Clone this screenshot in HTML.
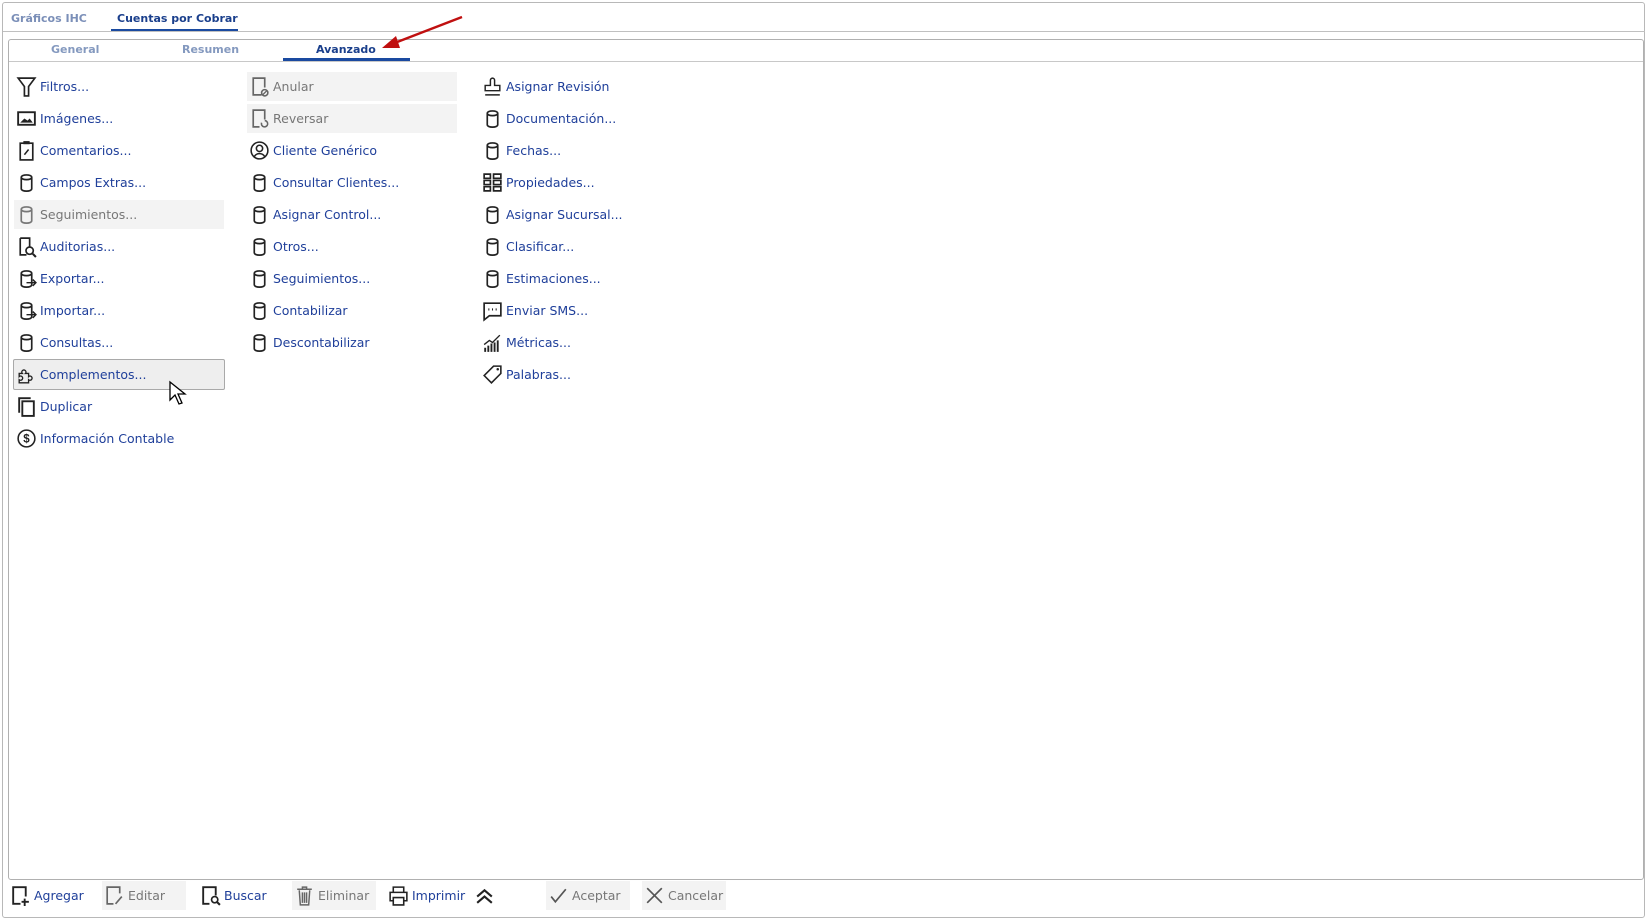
<!DOCTYPE html>
<html><head><meta charset="utf-8"><style>
*{margin:0;padding:0;box-sizing:border-box}
body{width:1647px;height:919px;background:#fff;font-family:"DejaVu Sans","Liberation Sans",sans-serif;position:relative;overflow:hidden}
.frame{position:absolute;left:2px;top:2px;width:1643px;height:916px;border:1px solid #b8b8b8;border-radius:3px}
.t{position:absolute;font-size:11px;font-weight:bold;white-space:nowrap}
.panel{position:absolute;left:8px;top:39px;width:1636px;height:841px;border:1px solid #b0b0b0;border-radius:3px}
.it{position:absolute;height:29px;display:flex;align-items:center;font-size:12.5px;color:#1f3f9a;white-space:nowrap;font-family:"DejaVu Sans",sans-serif}
.it svg{width:23px;height:23px;margin-left:1px;margin-right:2px;flex:none}
.dis{color:#777;background:#f3f3f3}
.sel{border:1px solid #a9a9a9;background:#eeeeee;border-radius:2px}
</style></head><body>
<div class="frame"></div>
<div class="t" style="left:11px;top:12px;color:#7b8fb8">Gráficos IHC</div>
<div class="t" style="left:117px;top:12px;color:#1a3f8c">Cuentas por Cobrar</div>
<div style="position:absolute;left:111px;top:29px;width:127px;height:3px;background:#1a4aa0"></div>
<div style="position:absolute;left:3px;top:31px;width:1642px;height:1px;background:#c0c0c0"></div>
<div class="panel"></div>
<div class="t" style="left:51px;top:43px;color:#8499bf">General</div>
<div class="t" style="left:182px;top:43px;color:#8499bf">Resumen</div>
<div class="t" style="left:316px;top:43px;color:#1a3f8c">Avanzado</div>
<div style="position:absolute;left:283px;top:58px;width:127px;height:3px;background:#1a4aa0"></div>
<div style="position:absolute;left:9px;top:61px;width:1634px;height:1px;background:#c8c8c8"></div>
<svg style="position:absolute;left:370px;top:10px" width="100" height="45"><line x1="92" y1="7" x2="22" y2="34" stroke="#c01010" stroke-width="2.5"/><polygon points="12,38 26,26 30,38" fill="#c01010"/></svg>

<div id="items"></div>
<script>
const cyl='<path d="M6 6c0-3 10-3 10 0v11c0 3-10 3-10 0zM6 6c0 3 10 3 10 0" fill="none" stroke="#222" stroke-width="1.6"/>';
const I={
cyl,
filt:'<path d="M3 3h16l-6 8v9h-4v-9z" fill="none" stroke="#222" stroke-width="1.6"/>',
img:'<rect x="3" y="5" width="16" height="12" fill="none" stroke="#222" stroke-width="1.8"/><path d="M5 15l4-4 3 2 2-2 3 4z" fill="#222"/>',
clip:'<rect x="5" y="4" width="12" height="16" fill="none" stroke="#222" stroke-width="1.6"/><rect x="8" y="2" width="6" height="3" fill="#222"/><path d="M9 15l4-5" stroke="#222" stroke-width="1.5"/>',
aud:'<path d="M5 3h9v9M5 3v16h6" fill="none" stroke="#222" stroke-width="1.6"/><circle cx="14" cy="15" r="3.5" fill="none" stroke="#222" stroke-width="1.6"/><path d="M17 18l3 3" stroke="#222" stroke-width="2"/>',
exp:cyl+'<path d="M11 15h9m-3-3l3 3-3 3" fill="none" stroke="#222" stroke-width="1.4"/>',
puz:'<path d="M4 10h3a2 2 0 1 1 3 0h3v3a2 2 0 1 1 0 3v3H4v-3a2 2 0 1 0 0-3z" fill="none" stroke="#222" stroke-width="1.3"/>',
dup:'<rect x="7" y="6" width="11" height="14" fill="none" stroke="#222" stroke-width="1.8"/><path d="M4 17V3h11" fill="none" stroke="#222" stroke-width="1.8"/>',
dol:'<circle cx="11" cy="11" r="8" fill="none" stroke="#222" stroke-width="1.5"/><text x="11" y="15" font-size="11" text-anchor="middle" font-family="Liberation Sans" font-weight="bold" fill="#222">$</text>',
anu:'<path d="M13 19H5V3h11v9" fill="none" stroke="#666" stroke-width="1.6"/><circle cx="16" cy="17" r="3" fill="none" stroke="#666" stroke-width="1.5"/><path d="M14 19l4-4" stroke="#666" stroke-width="1.3"/>',
rev:'<path d="M11 19H5V3h11v9" fill="none" stroke="#666" stroke-width="1.6"/><path d="M13 15a3 3 0 1 0 3-2" fill="none" stroke="#666" stroke-width="1.5"/>',
user:'<circle cx="11" cy="11" r="8" fill="none" stroke="#222" stroke-width="1.5"/><circle cx="11" cy="9" r="3" fill="none" stroke="#222" stroke-width="1.5"/><path d="M6 17c2-4 8-4 10 0" fill="none" stroke="#222" stroke-width="1.5"/>',
stamp:'<path d="M9 10V5a2 2 0 1 1 4 0v5h5v5H4v-5zM4 19h14" fill="none" stroke="#222" stroke-width="1.4"/>',
grid:'<path d="M3 3h6v4H3zM12 3h7v4h-7zM3 9h6v4H3zM12 9h7v4h-7zM3 15h6v4H3zM12 15h7v4h-7z" fill="none" stroke="#222" stroke-width="1.6"/>',
sms:'<path d="M3 4h16v12H8l-5 4z" fill="none" stroke="#222" stroke-width="1.6"/><path d="M7 10h1M10.5 10h1M14 10h1" stroke="#222" stroke-width="2"/>',
met:'<path d="M4 20v-4M7 20v-6M10 20v-8M13 20v-9M16 20v-11" stroke="#222" stroke-width="1.8"/><path d="M3 13l5-4 3 2 7-7" fill="none" stroke="#222" stroke-width="1.3"/>',
tag:'<path d="M3 12L12 3h7v7l-9 9z" fill="none" stroke="#222" stroke-width="1.5"/><circle cx="16" cy="6" r="1.2" fill="#222"/>'
};
const gcyl=cyl.replace(/#222/g,'#777');
const cols=[[14,[['filt','Filtros...'],['img','Imágenes...'],['clip','Comentarios...'],['cyl','Campos Extras...'],['gcyl','Seguimientos...','dis'],['aud','Auditorias...'],['exp','Exportar...'],['exp','Importar...'],['cyl','Consultas...'],['puz','Complementos...','sel'],['dup','Duplicar'],['dol','Información Contable']]],
[247,[['anu','Anular','dis'],['rev','Reversar','dis'],['user','Cliente Genérico'],['cyl','Consultar Clientes...'],['cyl','Asignar Control...'],['cyl','Otros...'],['cyl','Seguimientos...'],['cyl','Contabilizar'],['cyl','Descontabilizar']]],
[480,[['stamp','Asignar Revisión'],['cyl','Documentación...'],['cyl','Fechas...'],['grid','Propiedades...'],['cyl','Asignar Sucursal...'],['cyl','Clasificar...'],['cyl','Estimaciones...'],['sms','Enviar SMS...'],['met','Métricas...'],['tag','Palabras...']]]];
let h='';
cols.forEach(([x,list])=>list.forEach((it,i)=>{
 const y=72+i*32; const ic=it[0]=='gcyl'?gcyl:I[it[0]];
 const sel=it[2]=='sel';
 h+=`<div class="it ${it[2]||''}" style="left:${sel?13:x}px;top:${sel?y-1:y}px;width:${sel?212:210}px;${sel?'height:31px':''}"><svg viewBox="0 0 22 22">${ic}</svg>${it[1]}</div>`;
}));
document.getElementById('items').innerHTML=h;
</script>
<svg style="position:absolute;left:168px;top:380px" width="20" height="28"><path d="M2 2v18l5-5 4 9 3-1-4-9h7z" fill="#fff" stroke="#000" stroke-width="1.3"/></svg>

<div style="position:absolute;left:0;top:881px;height:30px;font-size:12.5px">
<div class="it" style="left:8px;top:0"><svg viewBox="0 0 22 22"><path d="M11 19H4V3h12v9M15 14v7M12 17h7" fill="none" stroke="#222" stroke-width="1.8"/></svg>Agregar</div>
<div class="it dis" style="left:102px;top:0;width:84px"><svg viewBox="0 0 22 22"><path d="M10 19H4V3h12v6M12 19l6-7" fill="none" stroke="#666" stroke-width="1.6"/></svg>Editar</div>
<div class="it" style="left:198px;top:0"><svg viewBox="0 0 22 22"><path d="M10 19H4V3h12v8" fill="none" stroke="#222" stroke-width="1.8"/><circle cx="15" cy="15" r="3" fill="none" stroke="#222" stroke-width="1.6"/><path d="M17 17l3 3" stroke="#222" stroke-width="2"/></svg>Buscar</div>
<div class="it dis" style="left:292px;top:0;width:84px"><svg viewBox="0 0 22 22"><path d="M4 5h14M9 5V3h4v2M6 6l1 14h8l1-14M9 8v10M11 8v10M13 8v10" fill="none" stroke="#666" stroke-width="1.4"/></svg>Eliminar</div>
<div class="it" style="left:386px;top:0"><svg viewBox="0 0 22 22"><path d="M6 8V3h10v5M6 16H3V8h16v8h-3M6 13h10v7H6z" fill="none" stroke="#222" stroke-width="1.5"/></svg>Imprimir<svg viewBox="0 0 22 22" style="margin-left:8px"><path d="M4 12l7-6 7 6M4 18l7-6 7 6" fill="none" stroke="#222" stroke-width="2"/></svg></div>
<div class="it dis" style="left:546px;top:0;width:84px"><svg viewBox="0 0 22 22"><path d="M4 12l4 5 10-12" fill="none" stroke="#555" stroke-width="1.6"/></svg>Aceptar</div>
<div class="it dis" style="left:642px;top:0;width:84px"><svg viewBox="0 0 22 22"><path d="M4 4l14 14M18 4L4 18" stroke="#555" stroke-width="1.6"/></svg>Cancelar</div>
</div>
</body></html>
